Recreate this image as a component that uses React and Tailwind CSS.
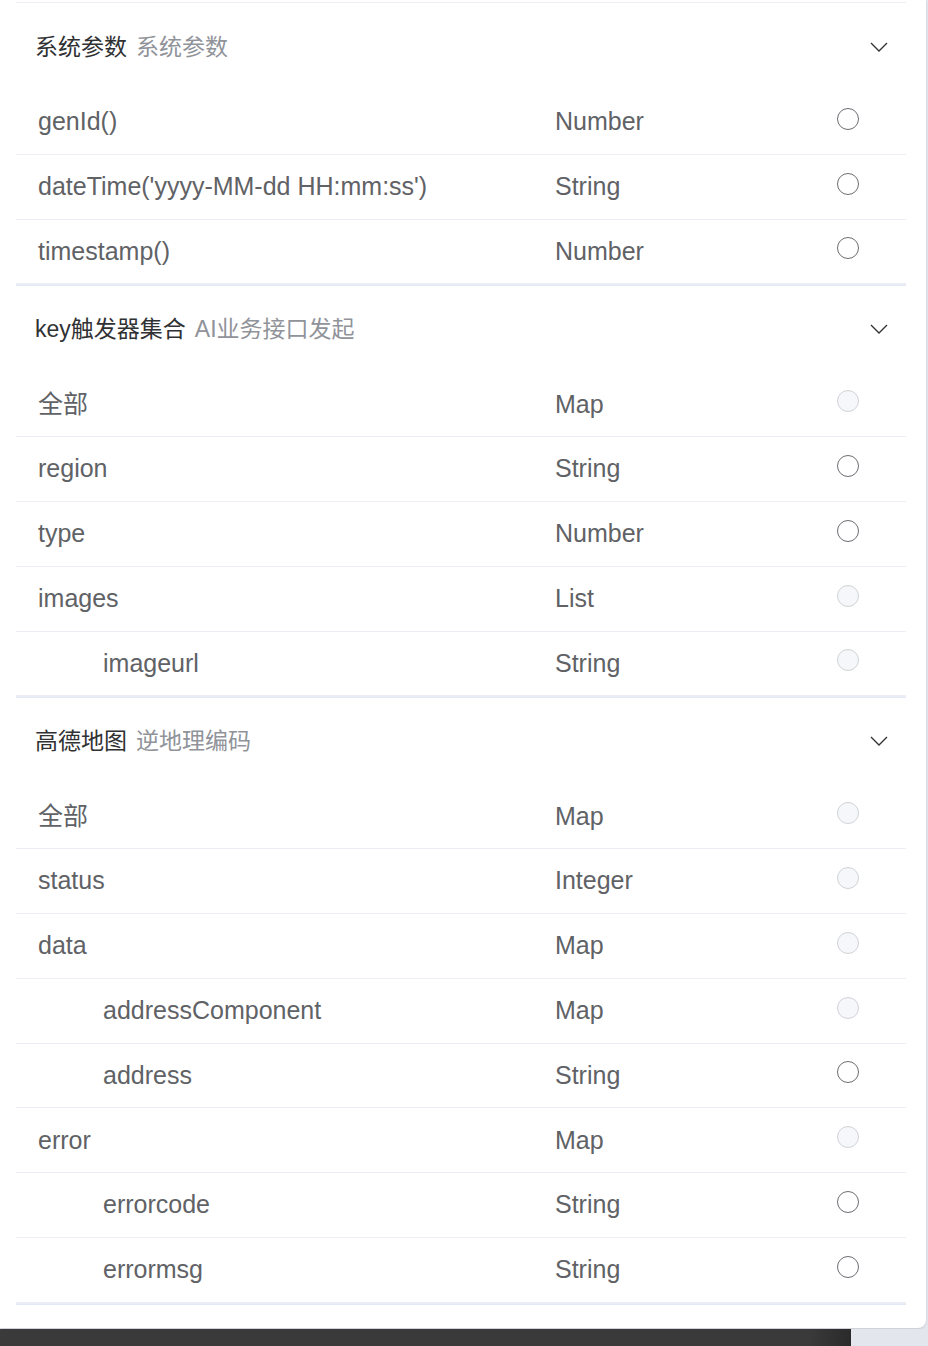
import React from "react";

const sections = [
  {
    title: "系统参数",
    sub: "系统参数",
    rows: [
      { name: "genId()", type: "Number", on: true },
      { name: "dateTime('yyyy-MM-dd HH:mm:ss')", type: "String", on: true },
      { name: "timestamp()", type: "Number", on: true },
    ],
  },
  {
    title: "key触发器集合",
    sub: "AI业务接口发起",
    rows: [
      { name: "全部", type: "Map", on: false },
      { name: "region", type: "String", on: true },
      { name: "type", type: "Number", on: true },
      { name: "images", type: "List", on: false },
      { name: "imageurl", type: "String", on: false, child: true },
    ],
  },
  {
    title: "高德地图",
    sub: "逆地理编码",
    rows: [
      { name: "全部", type: "Map", on: false },
      { name: "status", type: "Integer", on: false },
      { name: "data", type: "Map", on: false },
      { name: "addressComponent", type: "Map", on: false, child: true },
      { name: "address", type: "String", on: true, child: true },
      { name: "error", type: "Map", on: false },
      { name: "errorcode", type: "String", on: true, child: true },
      { name: "errormsg", type: "String", on: true, child: true },
    ],
  },
];

function Chevron() {
  return (
    <svg width="18" height="10" viewBox="0 0 18 10" fill="none">
      <path d="M1 1l8 8 8-8" stroke="#303133" strokeWidth="1.3" />
    </svg>
  );
}

function Radio({ on }) {
  return on ? (
    <span className="block w-[22px] h-[22px] rounded-full border-[1.5px] border-[#6b6d72] bg-white mb-[6px]" />
  ) : (
    <span className="block w-[22px] h-[22px] rounded-full border-[1.5px] border-[#d0d2d6] bg-[#f5f7fa] mb-[6px]" />
  );
}

function Section({ s, first }) {
  return (
    <div className="border-b border-[#e2e8f5]">
      <div
        className={
          "h-[86px] flex items-center justify-between pl-[19px] pr-[18px] " +
          (first ? "mt-[1px]" : "")
        }
      >
        <div className="text-[23px] leading-none flex items-center">
          <span className="text-[#303133]">{s.title}</span>
          <span className="text-[#909399] ml-[9px]">{s.sub}</span>
        </div>
        <Chevron />
      </div>
      {s.rows.map((r, i) => (
        <div
          key={i}
          className="h-[64.8px] flex items-center border-b border-[#ebeef5] text-[25px] text-[#606266]"
        >
          <div className={"w-[539px] " + (r.child ? "pl-[87px]" : "pl-[22px]")}>{r.name}</div>
          <div className="w-[282px]">{r.type}</div>
          <Radio on={r.on} />
        </div>
      ))}
      <div className="h-[1px] bg-[#ebeef5]" />
    </div>
  );
}

export default function App() {
  return (
    <div
      className="w-[928px] h-[1346px] bg-[#e4e6ee] flex flex-col overflow-hidden"
      style={{ fontFamily: '"Liberation Sans", Arial, "Noto Sans CJK SC", sans-serif' }}
    >
      <div className="w-[926px] h-[1328px] bg-white rounded-br-[8px] pl-[16px] pr-[20px] pt-[2px] shadow-sm">
        <div className="border-t border-[#ebeef5]">
          {sections.map((s, i) => (
            <Section key={i} s={s} first={i === 0} />
          ))}
        </div>
      </div>
      <div className="flex-1 flex mt-[1px]">
        <div className="w-[851px] bg-gradient-to-r from-[#3a3a3a] via-[#3a3a3a] via-95% to-[#2a2a2a]" />
        <div className="flex-1 bg-[#e4e6ee]" />
      </div>
    </div>
  );
}
